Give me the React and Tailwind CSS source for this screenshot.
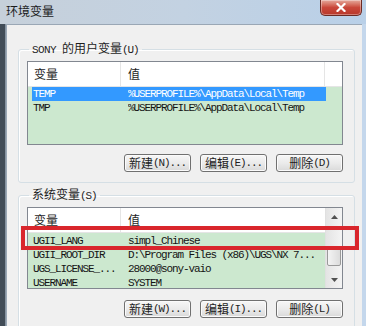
import React from 'react';

const MONO = "font-['Liberation_Mono','Noto_Sans_CJK_SC',monospace]";
const CJK = "font-['Noto_Sans_CJK_SC',sans-serif]";

function Label({ zh, hot, dots }) {
  return (
    <span className="inline-flex items-center whitespace-nowrap">
      <span className={`${CJK} text-[12px] leading-[14px]`}>{zh}</span>
      <span className={`${MONO} text-[11px] leading-[14px] tracking-[-1.1px]`}>({hot}){dots ? '...' : ''}</span>
    </span>
  );
}

function Btn({ zh, hot, dots }) {
  return (
    <button className="w-[67px] h-[18px] flex items-center justify-center rounded-[3px] border border-[#707070] bg-gradient-to-b from-[#f7f7f7] via-[#ebebeb] to-[#d9d9d9] text-[#1e1e1e] shadow-[inset_0_0_0_1px_#fbfbfb]">
      <Label zh={zh} hot={hot} dots={dots} />
    </button>
  );
}

function Header({ filler }) {
  return (
    <div className="flex h-[25px] bg-white border-b border-[#e5e5e5] text-[#1e1e1e]">
      <div className={`${CJK} w-[93px] border-r border-[#e5e5e5] pl-[6px] text-[12px] leading-[24px]`}>变量</div>
      <div className={`${CJK} flex-1 pl-[7px] text-[12px] leading-[24px] ${filler ? 'border-r border-[#e5e5e5]' : ''}`}>值</div>
      {filler && <div className="w-[17px]" />}
    </div>
  );
}

function Row({ name, value, selected }) {
  return (
    <div className={`ml-[4px] w-[294px] h-[14px] flex items-center ${MONO} text-[11px] tracking-[-1.1px] ${selected ? 'bg-[#3399ff] text-white' : 'text-[#141414]'}`}>
      <div className="w-[96px] pl-[1px] whitespace-nowrap overflow-hidden">{name}</div>
      <div className="flex-1 whitespace-nowrap overflow-hidden">{value}</div>
    </div>
  );
}

function Arrow({ up }) {
  return (
    <svg width="7" height="4" viewBox="0 0 7 4">
      <path d={up ? 'M0 4 L3.5 0 L7 4 Z' : 'M0 0 L3.5 4 L7 0 Z'} fill="#505050" />
    </svg>
  );
}

function Group({ zh, hot, children }) {
  return (
    <fieldset className="border border-[#d5dfe5] rounded-[3px] pl-[8px] pr-[11px] pt-[4px] pb-[10px] shadow-[inset_1px_1px_0_#ffffff]">
      <legend className="ml-[2px] px-[3px] text-[12px] leading-[14px] text-[#1e1e1e] whitespace-nowrap">
        <span className={`${MONO} text-[11px] leading-[14px] tracking-[-0.6px]`}>{zh[0]}</span>
        <span className={`${CJK} text-[12px] leading-[14px]`}>{zh[1]}</span>
        <span className={`${MONO} text-[11px] leading-[14px] tracking-[-1.1px]`}>({hot})</span>
      </legend>
      {children}
    </fieldset>
  );
}

function Buttons({ items }) {
  return (
    <div className="flex justify-end gap-[9px]">
      {items.map((b) => (
        <Btn key={b.hot} {...b} />
      ))}
    </div>
  );
}

export default function App() {
  return (
    <div className="relative w-[366px] h-[326px] overflow-hidden bg-[#c4d7ec]">
      {/* title bar */}
      <div className="h-[24px] flex items-start justify-between bg-gradient-to-r from-[#c6d0da] via-[#c3d2e2] to-[#b9d0e8]">
        <div className={`${CJK} pl-[6px] pt-[4px] text-[12px] leading-[14px] text-[#1b1b1b]`}>环境变量</div>
        <div className="mr-[4px] w-[42px] h-[16px] flex items-center justify-center rounded-b-[5px] border border-t-0 border-[#6b2a23] bg-gradient-to-b from-[#e4a99d] via-[#c9473a] to-[#b8382b] shadow-[inset_0_0_0_1px_rgba(255,255,255,0.35)]">
          <svg width="10" height="9" viewBox="0 0 10 9">
            <path d="M1.5 1 L8.5 8 M8.5 1 L1.5 8" stroke="#ffffff" strokeWidth="2.2" strokeLinecap="square" />
          </svg>
        </div>
      </div>

      <div className="flex h-[302px]">
        <div className="w-[6px] bg-[#414c57] border-r border-[#8693a0]" />
        <div className="w-[356px] bg-[#f0f0f0] border-l border-t border-[#9aa7b5] pl-[11px] pr-[7px]">
          <div className="mt-[16px]">
            <Group zh={['SONY ', '的用户变量']} hot="U">
              <div className="h-[84px] border border-[#828790] bg-[#cce8cf]">
                <Header filler />
                <Row name="TEMP" value="%USERPROFILE%\AppData\Local\Temp" selected />
                <Row name="TMP" value="%USERPROFILE%\AppData\Local\Temp" />
              </div>
              <div className="mt-[9px]">
                <Buttons
                  items={[
                    { zh: '新建', hot: 'N', dots: true },
                    { zh: '编辑', hot: 'E', dots: true },
                    { zh: '删除', hot: 'D' },
                  ]}
                />
              </div>
            </Group>
          </div>

          <div className="mt-[4px]">
            <Group zh={['', '系统变量']} hot="S">
              <div className="h-[82px] border border-[#828790] bg-[#cce8cf] flex">
                <div className="w-[297px]">
                  <Header />
                  <div className="pt-[1px]">
                    <Row name="UGII_LANG" value="simpl_Chinese" />
                    <Row name="UGII_ROOT_DIR" value="D:\Program Files (x86)\UGS\NX 7..." />
                    <Row name="UGS_LICENSE_..." value="28000@sony-vaio" />
                    <Row name="USERNAME" value="SYSTEM" />
                  </div>
                </div>
                <div className="w-[17px] flex flex-col bg-gradient-to-r from-[#e4e4e4] to-[#f4f4f4] border-l border-[#e0e0e0]">
                  <div className="h-[17px] flex items-center justify-center">
                    <Arrow up />
                  </div>
                  <div className="flex-1">
                    <div className="mt-[23px] mx-[1px] h-[18px] rounded-[2px] border border-[#9a9a9a] bg-gradient-to-r from-[#f4f4f4] to-[#dcdcdc]" />
                  </div>
                  <div className="h-[17px] flex items-center justify-center">
                    <Arrow />
                  </div>
                </div>
              </div>
              <div className="mt-[11px]">
                <Buttons
                  items={[
                    { zh: '新建', hot: 'W', dots: true },
                    { zh: '编辑', hot: 'I', dots: true },
                    { zh: '删除', hot: 'L' },
                  ]}
                />
              </div>
            </Group>
          </div>
        </div>
        <div className="w-[4px] bg-[#c4d7ec]" />
      </div>

      {/* red annotation box */}
      <div className="absolute left-[21px] top-[226px] w-[338px] h-[24px] border-[4px] border-[#d9262c]" />
    </div>
  );
}
